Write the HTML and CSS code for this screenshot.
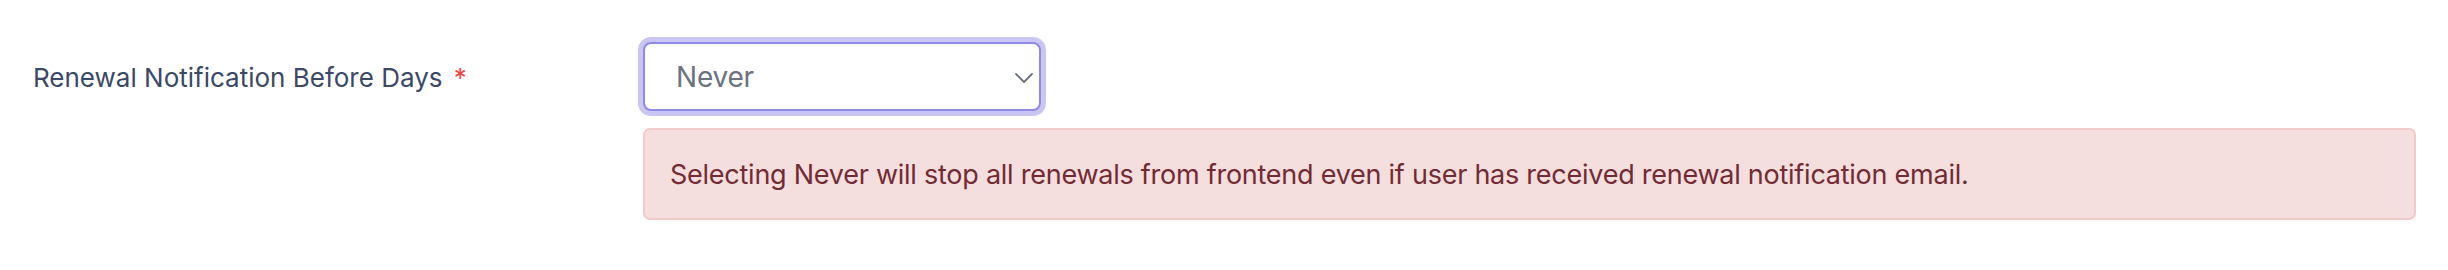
FILE: index.html
```html
<!DOCTYPE html>
<html lang="en">
<head>
<meta charset="utf-8">
<title>Renewal Notification</title>
<link rel="stylesheet" href="styles.css">
</head>
<body>
<div class="form-row">
  <label class="field-label" for="renewal-days">Renewal Notification Before Days <span class="required">*</span></label>
  <div class="field-control">
    <div class="select-wrap">
      <select id="renewal-days" class="select">
        <option>Never</option>
      </select>
      <svg class="chevron" width="18" height="10" viewBox="0 0 18 10" aria-hidden="true"><path d="M1 1 L9 9 L17 1" fill="none" stroke="#6b7280" stroke-width="1.8" stroke-linecap="round" stroke-linejoin="round"/></svg>
    </div>
    <div class="alert">Selecting Never will stop all renewals from frontend even if user has received renewal notification email.</div>
  </div>
</div>
</body>
</html>
```

FILE: styles.css
```css
* { box-sizing: border-box; }
html, body { margin: 0; padding: 0; background: #ffffff; }
body { font-family: Inter, "Noto Sans", "Liberation Sans", sans-serif; }

.form-row {
  display: flex;
  align-items: flex-start;
  padding: 42px 32px 0 33px;
}

.field-label {
  width: 610px;
  flex: 0 0 610px;
  font-size: 26px;
  line-height: 71px;
  color: #3b4866;
}

.required {
  color: #ef4444;
  margin-left: 4px;
}

.field-control {
  flex: 1;
  display: flex;
  flex-direction: column;
  gap: 17px;
}

.select-wrap {
  position: relative;
  width: 398px;
  height: 69px;
}

.select {
  appearance: none;
  -webkit-appearance: none;
  width: 100%;
  height: 100%;
  margin: 0;
  padding: 0 60px 0 31px;
  font-family: inherit;
  font-size: 28px;
  letter-spacing: -0.2px;
  color: #6b7280;
  background: #ffffff;
  border: 2px solid #8f8ae6;
  border-radius: 8px;
  box-shadow: 0 0 0 5px #cac6f4;
  outline: none;
}

.chevron {
  position: absolute;
  right: 8px;
  top: 31px;
  pointer-events: none;
}

.alert {
  background: #f4dede;
  border: 2px solid #f1caca;
  border-radius: 7px;
  color: #722b33;
  font-size: 27px;
  letter-spacing: -0.25px;
  line-height: 42px;
  padding: 24px 25px 22px;
}
```
